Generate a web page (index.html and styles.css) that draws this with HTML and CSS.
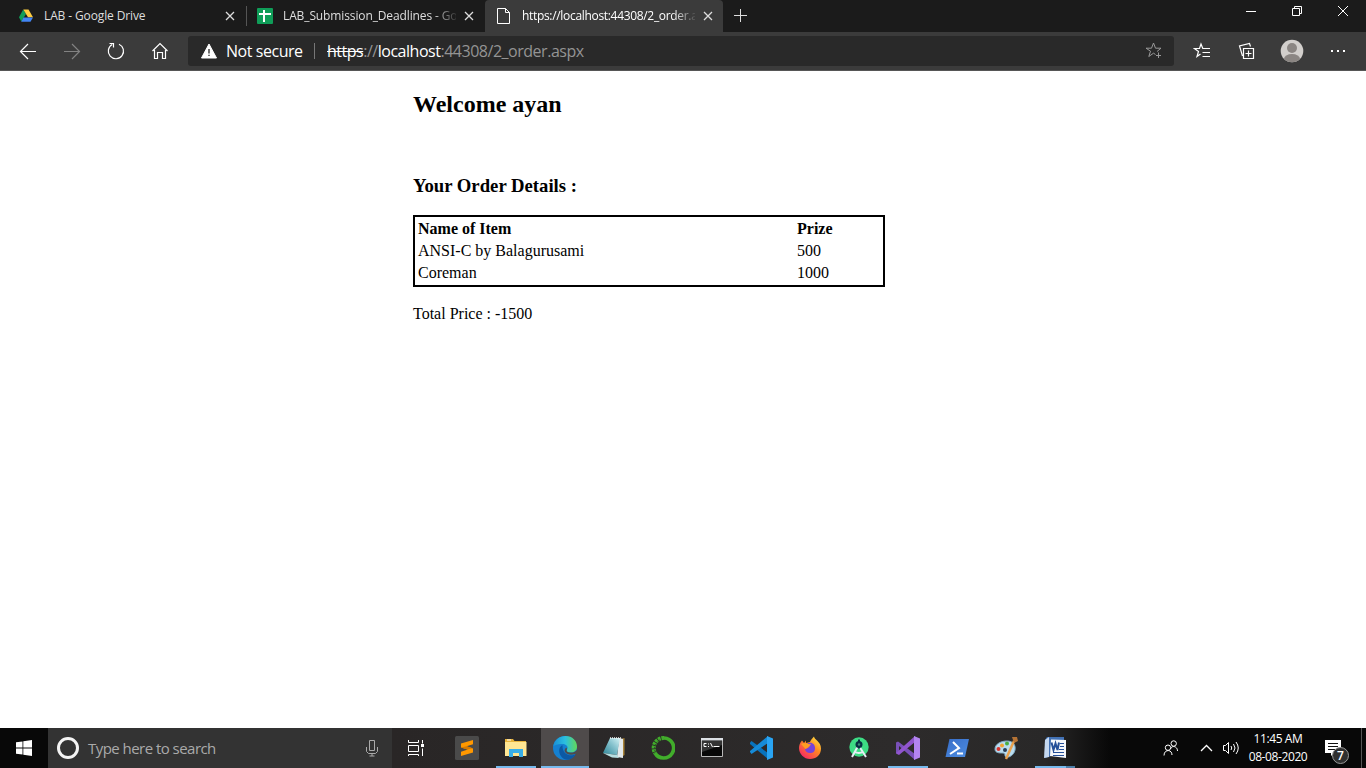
FILE: index.html
```
<!DOCTYPE html>
<html lang="en">
<head>
<meta charset="utf-8">
<title>Order</title>
<link rel="stylesheet" href="styles.css">
</head>
<body>
<header class="tabs">
  <div class="tab tab-first">
    <svg class="fav" viewBox="0 0 16 16"><path fill="#0f9d58" d="M5.200 1.500 1 9.200l2.300 4.300L8 6z"/><path fill="#ffcd40" d="M5.300 1.500h5.200L15 9.300H10z"/><path fill="#4285f4" d="M5.500 9.500H15l-2.500 4.300H3.200z"/></svg>
    <span class="title t1">LAB - Google Drive</span>
    <svg class="close" viewBox="0 0 10 10"><path d="M1 1l8 8M9 1l-8 8"/></svg>
  </div>
  <div class="tab tab-second">
    <svg class="fav" viewBox="0 0 16 16"><rect width="16" height="16" rx="1" fill="#0f9d58"/><path d="M2 6h12M7 2v12" stroke="#fff" stroke-width="2"/></svg>
    <span class="title t2">LAB_Submission_Deadlines - Goo</span>
    <svg class="close" viewBox="0 0 10 10"><path d="M1 1l8 8M9 1l-8 8"/></svg>
  </div>
  <div class="tab tab-active">
    <svg class="fav" viewBox="0 0 16 16"><path d="M1.500.500h8l4 4v11h-12zM9.500.500v4h4" fill="none" stroke="#fff"/></svg>
    <span class="title t3">https://localhost:44308/2_order.a</span>
    <svg class="close" viewBox="0 0 10 10"><path d="M1 1l8 8M9 1l-8 8"/></svg>
  </div>
  <svg class="plus" viewBox="0 0 13 13"><path d="M6.500 0v13M0 6.500h13"/></svg>
  <div class="winctl">
    <svg viewBox="0 0 12 12"><path d="M1 6.500h10"/></svg>
    <svg viewBox="0 0 12 12"><path d="M1.500 3.500h7v7h-7zM3.500 3.500v-2h7v7h-2"/></svg>
    <svg viewBox="0 0 12 12"><path d="M1 1l10 10M11 1L1 11"/></svg>
  </div>
</header>
<nav class="toolbar">
  <div class="navs">
    <svg viewBox="0 0 18 18"><path d="M17 9.500H1.500M9 2L1.500 9.500 9 17"/></svg>
    <svg class="dim" viewBox="0 0 18 18"><path d="M1 9.500h15.500M9 2l7.500 7.500L9 17"/></svg>
    <svg viewBox="0 0 18 18"><path d="M12 2.200a7.600 7.600 0 1 1-6.800.300M2.500 1.500h4v4"/></svg>
    <svg viewBox="0 0 18 18"><path d="M3.500 8v8.500h3v-6h5v6h3V8M1.500 9L9 1.500 16.500 9"/></svg>
  </div>
  <div class="address">
    <svg class="warn" viewBox="0 0 16 16"><path fill="#fff" d="M8 1l7.500 14H.5z"/><path stroke="#222" stroke-width="1.300" d="M8 6v4.500M8 11.800v1.300"/></svg>
    <span class="secure">Not secure</span>
    <span class="sep"></span>
    <span class="url"><s>https</s>://<b>localhost</b>:44308/2_order.aspx</span>
    <svg class="star" viewBox="0 0 18 18"><path d="M10.500 12.500 8.500 11.200 3.800 14.500 5.500 9.200 1 6.200h5.500L8.500 1l2 5.200H16L12 9.500M13.500 10.500v5.500M11 13.500h5"/></svg>
  </div>
  <div class="actions">
    <svg viewBox="0 0 18 18"><path d="M7.500 12 4 14.500 5.500 9.500 1.500 6.500h5L8 2l1.800 4.500H17M9.500 10.500H17M9.500 14.500H17"/></svg>
    <svg viewBox="0 0 18 18"><path d="M5.500 6.500h10v10h-10zM10.500 8.500v6M7.500 11.500h6M4.500 14 1.500 4l10-2.500 1 3"/></svg>
    <svg class="person" viewBox="0 0 24 24"><clipPath id="avatar"><circle cx="12" cy="12" r="11.300"/></clipPath><g clip-path="url(#avatar)" stroke="none"><rect width="24" height="24" fill="#d2cfcc"/><circle cx="12" cy="9" r="5" fill="#8b8683"/><ellipse cx="12" cy="20" rx="8" ry="5" fill="#8b8683"/></g></svg>
    <svg viewBox="0 0 18 18"><path stroke-width="2" d="M2 9h2M8 9h2M14 9h2"/></svg>
  </div>
</nav>
<main class="page">
  <h2>Welcome ayan</h2>
  <h3>Your Order Details :</h3>
  <table class="order">
    <tr><th>Name of Item</th><th>Prize</th></tr>
    <tr><td>ANSI-C by Balagurusami</td><td>500</td></tr>
    <tr><td>Coreman</td><td>1000</td></tr>
  </table>
  <p>Total Price : -1500</p>
</main>
<footer class="taskbar">
  <div class="start"><svg viewBox="0 0 16 16"><path fill="#fff" d="M0 2.300 6.500 1.400v6.100H0zM7.300 1.300 16 0v7.500H7.300zM0 8.400h6.500v6.200L0 13.700zM7.300 8.400H16V16l-8.700-1.300z"/></svg></div>
  <div class="search">
    <span class="cortana"></span>
    <span class="hint">Type here to search</span>
    <svg class="mic" viewBox="0 0 12 18"><path d="M3.500 1.500h5v10h-5zM.5 8v4.500l2 2h7l2-2V8M6 14.500V17M3.500 17h5"/></svg>
  </div>
  <div class="tview"><svg viewBox="0 0 18 18"><path d="M1.500 1v2.500h10V1M1.500 6.500h10v6h-10zM1.500 17v-1.500h10V17M15.500 1v3.500M15.500 9.500V17"/><path d="M14 5h3v3h-3z" fill="#fff" stroke="none"/></svg></div>
  <div class="app"><svg viewBox="0 0 24 24"><rect width="24" height="24" rx="1.500" fill="#4a4a4a"/><path fill="#ff9800" d="M6 7.500 18 4v4.200l-6.500 2 6.500 2.200v4L6 20v-4.200l6.800-2.200L6 11.500z"/><path d="m6 11.500 6 2 6-1.200-6.500-2z" fill="#d77a00"/></svg></div>
  <div class="app open"><svg viewBox="0 0 24 24"><path fill="#e8b43c" d="M1 3h8l1.500 2H22v3H1z"/><path fill="#ffe693" d="M1 6h21.500v14H1z"/><path d="M3 4h4" stroke="#fff"/><path fill="#38aee8" d="M5 13h14v8h-4v-4H9v4H5z"/></svg></div>
  <div class="app open current"><svg viewBox="0 0 24 24"><defs><linearGradient id="e1" x1="0" y1=".3" x2="1" y2=".3"><stop stop-color="#1a8fd5"/><stop offset=".5" stop-color="#2bbfe0"/><stop offset="1" stop-color="#62d858"/></linearGradient></defs><circle cx="12" cy="12" r="12" fill="#1580d0"/><path fill="url(#e1)" d="M.3 10C1.500 4 6.500 0 12.500 0 19.500 0 24 5 24 10.500c0 4-3 6-6.500 6s-4.500-1.500-3.500-3c2-3-1-5.500-4.500-5.500C5.500 7.500 2 9 .3 10z"/><path fill="#0c59a4" d="M9.500 9.200C3 12 7 23.500 14 23.700c4 0 7.300-2.700 8.700-5.800-4.500 3-13.700 1.200-13.200-8.700z"/><path fill="#4f4b4b" d="M13.800 13.800c-.8 1.800 1.700 2.900 4.200 2.800 2.500 0 4.500-1 6-2.600v5l-1.500-1.300c-3.500 1.600-8.500 1.300-10.500-1.700-1-1.500 0-3.500 1.200-4.500.8.500 1 1.500.6 2.300z"/></svg></div>
  <div class="app"><svg viewBox="0 0 24 24"><defs><linearGradient id="note" x1="0" y1="1" x2="1" y2="0"><stop stop-color="#2c8496"/><stop offset=".6" stop-color="#8ac5d0"/><stop offset="1" stop-color="#d5f3f5"/></linearGradient></defs><path fill="#a98338" d="m19 3 3.500-1v17l-3 2z"/><path fill="#e3e9eb" d="m17 2 4 1v19l-6-1z"/><path fill="url(#note)" d="M8 2h10l-3 17-14-2z"/><path d="m1 17 14 2 2 3-7-.5z" fill="#b8dde0"/><path d="M8 2h11" stroke="#eee" stroke-width="1.500" stroke-dasharray="1 1"/></svg></div>
  <div class="app"><svg viewBox="0 0 24 24"><path d="M13 2a10 10 0 1 1-9 15" fill="none" stroke="#41ad2b" stroke-width="3.700"/><path d="M13 2A10 10 0 0 0 4 17" fill="none" stroke="#41ad2b" stroke-width="4" stroke-dasharray="2.600 .8"/><path d="M9 4A9 9 0 0 0 4 15" fill="none" stroke="#292827" stroke-width=".8" stroke-dasharray="1.500 1.500"/></svg></div>
  <div class="app"><svg viewBox="0 0 24 24"><path fill="#070707" stroke="#b8b8b8" d="M1.500 2.500h21v18h-21z"/><path fill="#dce0e5" d="M1 2h22v2.500H1z"/><path d="M2 5h20v4L2 16z" fill="#343434"/><path d="M6.500 7.500H4v3h2.500M8.500 7.500v1M8.500 10v1M10.500 7l2 4M13.500 10.500h6" fill="none" stroke="#fff"/></svg></div>
  <div class="app"><svg viewBox="0 0 24 24"><path fill="#0873bd" d="M1 6.500 2.500 5 19 17v6L1 8z"/><path fill="#168bd8" d="m1 16 1.500 2L19 7V0L1 15z"/><path fill="#29a4f3" d="m18 0 6 2.500v19L18 24z"/></svg></div>
  <div class="app"><svg viewBox="0 0 24 24"><defs><linearGradient id="fox" x1="1" y1="0" x2=".2" y2="1"><stop stop-color="#fff64c"/><stop offset=".45" stop-color="#ff8b21"/><stop offset="1" stop-color="#f62367"/></linearGradient></defs><path fill="url(#fox)" d="M4 4.500 6 7l2-2.500V7l4-1c1-2.500 2.500-4 4-5.500 0 3 7 5 7 12C23 19 18 23 12 23S1 18 1 12c0-3 1-5 3-7.500z"/><path fill="#7643da" d="M9 8c4-3 8 0 8 4s-2 5-5 5-5-2-5-4l3-1 2-2z"/><path fill="#ff9d22" d="M3 8c3-1.500 5-1 7 0l3 .3c-.5 1.500-3 1.700-3.500 3.500L7.500 13z"/></svg></div>
  <div class="app"><svg viewBox="0 0 24 24"><circle cx="12" cy="11" r="9.700" fill="#3ddc84"/><path d="m11 10-6 11M12 10l7 11M7 15.500q5 3 9.500 0" fill="none" stroke="#e7edf5" stroke-width="2"/><circle cx="12" cy="8.500" r="3.500" fill="#073042"/><path d="M12 3.500v9" stroke="#073042" stroke-width="2"/><circle cx="12" cy="8.500" r="1.200" fill="#3d8c74"/></svg></div>
  <div class="app open"><svg viewBox="0 0 24 24"><path fill="#7950b8" d="M0 6.500 2 5.500 19 18v6L3 10v7l-2 1-1-1z"/><path fill="#9155ce" d="m1 18 2 1L19 6V0L0 17z"/><path fill="#b384f1" d="m18 0 6 2.500v19L18 24z"/></svg></div>
  <div class="app"><svg viewBox="0 0 24 24"><defs><linearGradient id="ps" y2="1"><stop stop-color="#376dc8"/><stop offset="1" stop-color="#4d8de1"/></linearGradient></defs><path fill="url(#ps)" d="M4.500 3H24l-4 18H.5z"/><path d="m8 6 6 6-9 6M12 17.500h6" fill="none" stroke="#fff" stroke-width="2"/></svg></div>
  <div class="app"><svg viewBox="0 0 24 24"><path fill="#b9dcef" stroke="#83aec7" d="M1 13C1 8 7 5 13 5s9 4 8 9-6 8-9 7c-2-1 0-4-3-4-4 0-8 0-8-4z"/><circle cx="4.500" cy="13" r="2" fill="#d7322d"/><circle cx="8" cy="9.500" r="2" fill="#f2a431"/><circle cx="13" cy="7.500" r="2" fill="#48af42"/><circle cx="11" cy="14" r="2" fill="#263c55"/><path stroke="#e8a14d" stroke-width="2.500" d="m20 5-8 18"/><path fill="#b57335" d="m18 1 5 0 1 4-4 2z"/></svg></div>
  <div class="app open grouped"><svg viewBox="0 0 24 24"><path fill="#4271b4" d="M4 1h17v15L2 22V4z"/><path fill="#c4d7ef" d="M2 4 6 1v20l-5 1z"/><path fill="#f5f7fb" d="M8 3.500 23 4v18L7 20z"/><path d="M8.500 6.500 10.500 14l2-6.500 2 6.500 1.500-7.500" fill="none" stroke="#244f99" stroke-width="2"/><path d="M17 7.500h4M17 10.500h4M16 13.500h5M10 16.500h11M10 19.500h11" fill="none" stroke="#244f99"/></svg></div>
  <div class="tray">
    <svg class="people" viewBox="0 0 16 16"><circle cx="10.700" cy="3.500" r="2.700"/><circle cx="5" cy="7.700" r="2.700"/><path d="M1 15.500c0-6.500 8-6.500 8-.5M7.500 9c1-4 7-3 7 2"/></svg>
    <svg class="chev" viewBox="0 0 13 8"><path d="m1 7 5.500-5.500L12 7"/></svg>
    <svg class="sound" viewBox="0 0 18 14"><path d="M1.500 4.500h2l3-3v11l-3-3h-2zM9 5q1.500 2 0 4M11.500 3q3 4 0 8M14 1q4.500 6 0 12"/></svg>
    <div class="clock"><span class="time">11:45 AM</span><span class="date">08-08-2020</span></div>
    <div class="notice"><svg viewBox="0 0 16 16"><path fill="#fff" d="M0 0h16v13H9l-3 3v-3H0z"/><path d="M3 3.500h10M3 6.500h10M3 9.500h7" stroke="#111"/></svg><span class="count">7</span></div>
  </div>
</footer>
</body>
</html>
```
FILE: styles.css
```
* { box-sizing: border-box; }
body { margin: 0; width: 1366px; height: 768px; overflow: hidden; display: flex; flex-direction: column; background: #fff; font-family: "Open Sans", "Noto Sans", sans-serif; }
svg { display: block; flex: none; fill: none; }
.tabs { height: 32px; background: #1b1b1b; display: flex; flex: none; color: #dedede; font-size: 12px; align-items: stretch; }
.tab { display: flex; align-items: center; white-space: nowrap; }
.tab-first { width: 247px; padding: 0 12px 0 18px; position: relative; }
.tab-first::after { content: ""; position: absolute; right: 0; top: 6px; height: 20px; width: 1px; background: #555; }
.tab-second { width: 238px; padding: 0 11px 0 10px; }
.tab-active { width: 238px; padding: 0 10px 0 11px; background: #3b3b3b; border-radius: 4px 4px 0 0; color: #fff; }
.fav { width: 16px; height: 16px; }
.title { margin-left: 10px; line-height: 20px; flex: none; }
.t1 { width: 170px; letter-spacing: -.12px; }
.t2, .t3 { width: 173px; -webkit-mask-image: linear-gradient(90deg, #000 150px, transparent 176px); mask-image: linear-gradient(90deg, #000 150px, transparent 176px); }
.t2 { letter-spacing: -.12px; }
.t3 { letter-spacing: -.32px; }
.close { width: 10px; height: 10px; margin-left: auto; stroke: #ddd; stroke-width: 1.300; }
.plus { width: 13px; height: 13px; margin: 9px 0 0 11px; stroke: #ddd; }
.winctl { margin-left: auto; margin-right: 17px; padding-top: 5px; display: flex; gap: 34px; stroke: #fff; }
.winctl svg { width: 12px; height: 12px; }
.toolbar { height: 39px; border-bottom: 1px solid #565656; background: #3b3b3b; display: flex; flex: none; align-items: center; stroke: #fff; }
.navs { width: 188px; display: flex; gap: 26px; padding-left: 19px; }
.navs svg, .actions svg { width: 18px; height: 18px; stroke-width: 1.200; }
.navs .dim { stroke: #828282; }
.address { width: 986px; height: 30px; border-radius: 3px; background: #292929; display: flex; align-items: center; padding: 0 11px 0 13px; font-size: 16px; color: #fff; white-space: nowrap; }
.warn { width: 16px; height: 16px; }
.secure { margin-left: 9px; width: 77px; letter-spacing: -.45px; }
.sep { width: 1px; height: 16px; background: #777; margin: 0 12px 0 11px; }
.url { color: #949494; letter-spacing: -.48px; }
.url s, .url b { color: #fff; font-weight: 400; }
.star { width: 18px; height: 18px; stroke: #999; margin-left: auto; }
.actions { display: flex; align-items: center; padding-left: 19px; }
.actions svg { margin-right: 27px; }
.actions .person { width: 24px; height: 24px; margin-left: -3px; margin-right: 25px; }
.actions svg:last-child { margin-right: 0; }
.page { flex: 1; padding: 20px 0 0 413px; font-family: "Liberation Serif", serif; font-size: 16px; color: #000; }
.page h2 { margin: 0; font-size: 24px; line-height: 27px; }
.page h3 { margin: 57px 0 19px; font-size: 18.720px; line-height: 21px; }
.order { width: 472px; height: 72px; border: 2px solid #000; border-spacing: 2px; table-layout: fixed; }
.order th, .order td { padding: 1px; line-height: 18px; text-align: left; }
.order th:first-child { width: 377px; }
.page p { margin: 18px 0 0; line-height: 18px; }
.taskbar { height: 40px; display: flex; flex: none; background: linear-gradient(90deg, #292626 392px, #2d2b2b 900px, #292828 1045px, #080808 1110px); }
.start { width: 48px; background: #080808; display: flex; align-items: center; justify-content: center; }
.start svg { width: 16px; height: 16px; }
.search { width: 344px; background: #333; display: flex; align-items: center; padding: 0 14px 0 9px; }
.cortana { width: 22px; height: 22px; border: 3px solid #f4f4f4; border-radius: 50%; }
.hint { margin-left: 9px; font-size: 15px; color: #aaa; letter-spacing: -.54px; }
.mic { width: 12px; height: 18px; margin-left: auto; stroke: #aaa; }
.tview { width: 50px; padding: 11px 0 0 15px; stroke: #fff; }
.tview svg { width: 18px; height: 18px; }
.app { width: 49px; display: flex; justify-content: center; padding-top: 8px; position: relative; }
.app svg { width: 24px; height: 24px; }
.open::after { content: ""; position: absolute; bottom: 0; left: 5px; width: 40px; height: 2px; background: #76b9ed; }
.current { background: #4f4b4b; width: 48px; margin-left: 1px; }
.current::after { left: 0; width: 48px; }
.grouped::after { background: linear-gradient(90deg, #76b9ed 31px, #4d7fa9 31px); }
.tray { margin-left: auto; margin-right: 4px; border-right: 1px solid #555; width: 199px; height: 40px; display: flex; align-items: center; stroke: #fff; }
.people { width: 16px; height: 16px; }
.chev { width: 13px; height: 8px; margin-left: 21px; stroke-width: 1.300; }
.sound { width: 18px; height: 14px; margin-left: 9px; }
.clock { width: 62px; margin-left: 7px; display: flex; flex-direction: column; align-items: center; color: #fff; font-size: 12px; line-height: 18px; stroke: none; white-space: nowrap; }
.time { letter-spacing: -.4px; }
.date { letter-spacing: -.4px; }
.notice { margin-left: 16px; position: relative; stroke: none; }
.notice svg { width: 16px; height: 16px; }
.count { position: absolute; left: 7px; top: 7px; width: 17px; height: 17px; background: #303030; border: 1px solid #999; border-radius: 50%; color: #fff; font-size: 12px; line-height: 15px; text-align: center; font-weight: 600; }
```
